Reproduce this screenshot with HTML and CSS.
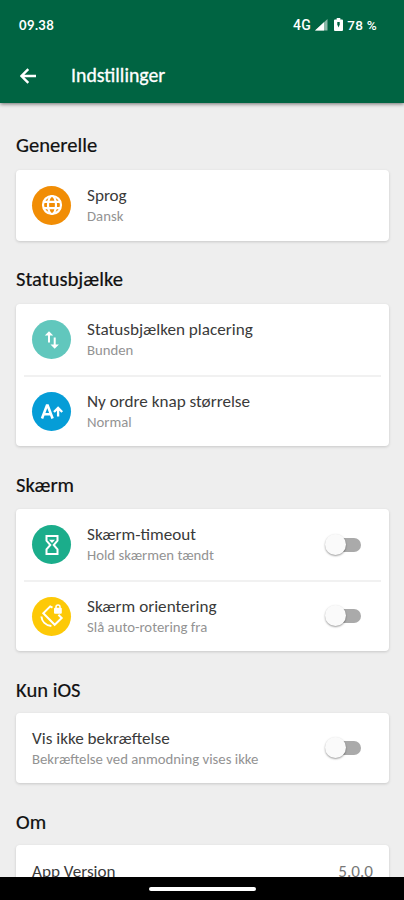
FILE: index.html
```
<!DOCTYPE html>
<html lang="da">
<head>
<meta charset="utf-8">
<title>Indstillinger</title>
<link rel="stylesheet" href="styles.css">
</head>
<body>
<div class="screen">
  <header class="top">
    <div class="status">
      <span class="time">09.38</span>
      <div class="indicators">
        <span class="net">4G</span>
        <svg class="signal" width="13" height="12" viewBox="0 0 13 12"><path d="M0 11.5 12.5 0v11.5z" fill="#fff" opacity=".55"/><path d="M0 11.5 9 3.2v8.3z" fill="#fff"/></svg>
        <svg class="battery" width="9" height="13" viewBox="0 0 9 13"><path d="M2.7 0h3.6v1.4H8q1 0 1 1V12q0 1-1 1H1q-1 0-1-1V2.4q0-1 1-1h1.7z" fill="#fff"/><path d="M3.3 4h2.4v2.5L4.5 9.5 3.3 6.5z" fill="#006442"/></svg>
        <span class="percent">78 %</span>
      </div>
    </div>
    <div class="appbar">
      <svg class="back" width="16" height="16" viewBox="0 0 16 16" fill="none" stroke="#fff" stroke-width="2.4"><path d="M16 8H2M8.3 1.2 1.5 8l6.8 6.8"/></svg>
      <h1>Indstillinger</h1>
    </div>
  </header>
  <main>
    <h2 class="h-general">Generelle</h2>
    <section class="card">
      <div class="row single">
        <div class="icon orange"><svg width="22" height="22" viewBox="0 0 22 22" fill="none" stroke="#fff" stroke-width="2.2"><circle cx="11" cy="11" r="9"/><ellipse cx="11" cy="11" rx="4" ry="9"/><path d="M2.8 7.8h16.4M2.8 14.2h16.4"/></svg></div>
        <div class="text"><p class="title">Sprog</p><p class="sub">Dansk</p></div>
      </div>
    </section>
    <h2>Statusbjælke</h2>
    <section class="card">
      <div class="row">
        <div class="icon teal"><svg width="16" height="20" viewBox="0 0 16 20" fill="none" stroke="#fff" stroke-width="2"><path d="M5 12.5V3M10.7 7.5v9.5"/><path d="M.8 5.6 5 1.3l4.2 4.3zM6.5 14.4l4.2 4.3 4.2-4.3z" fill="#fff" stroke="none"/></svg></div>
        <div class="text"><p class="title">Statusbjælken placering</p><p class="sub">Bunden</p></div>
      </div>
      <div class="row">
        <div class="icon blue"><svg width="24" height="18" viewBox="0 0 24 18" fill="none" stroke="#fff" stroke-width="2.6"><path d="M2 16.5 6.9 3.5h.8l4.9 13M4 12.3h6.6"/><path d="M18.1 14.5V6M14 10l4.1-4.1 4.1 4.1" stroke-width="2.3"/></svg></div>
        <div class="text"><p class="title">Ny ordre knap størrelse</p><p class="sub">Normal</p></div>
      </div>
    </section>
    <h2 class="h-screen">Skærm</h2>
    <section class="card">
      <div class="row">
        <div class="icon green"><svg width="14" height="22" viewBox="0 0 14 22" fill="none" stroke="#fff" stroke-width="2"><path d="M1.5 2h11v4.7L8.7 11l3.8 4.3V20h-11v-4.7L5.3 11 1.5 6.7z"/><path d="M4 5.8h6L7 9z" fill="#fff" stroke="none"/></svg></div>
        <div class="text"><p class="title">Skærm-timeout</p><p class="sub">Hold skærmen tændt</p></div>
        <div class="switch"><i class="track"></i><i class="thumb"></i></div>
      </div>
      <div class="row">
        <div class="icon yellow"><svg width="24" height="24" viewBox="0 0 24 24" fill="none" stroke="#fff" stroke-width="2"><path d="M12.5 3.6 10.2 2.4 3.3 9.2l11.4 11.6 7-6.8-3.3-3.3M1.4 12.5c.4 5 4.2 8.8 10 9.6"/><rect x="14" y="3.7" width="7.8" height="6" rx="1" fill="#fff" stroke="none"/><path d="M16 4.5V3q0-2 2-2t2 2v1.5" stroke-width="1.5"/></svg></div>
        <div class="text"><p class="title">Skærm orientering</p><p class="sub">Slå auto-rotering fra</p></div>
        <div class="switch"><i class="track"></i><i class="thumb"></i></div>
      </div>
    </section>
    <h2 class="h-ios">Kun iOS</h2>
    <section class="card">
      <div class="row single ios">
        <div class="text"><p class="title">Vis ikke bekræftelse</p><p class="sub">Bekræftelse ved anmodning vises ikke</p></div>
        <div class="switch"><i class="track"></i><i class="thumb"></i></div>
      </div>
    </section>
    <h2 class="h-about">Om</h2>
    <section class="card">
      <div class="row version">
        <p class="title">App Version</p><p class="title number">5.0.0</p>
      </div>
    </section>
  </main>
  <footer><span class="handle"></span></footer>
</div>
</body>
</html>
```
FILE: styles.css
```
* { box-sizing: border-box; }
body { margin: 0; font-family: Carlito, Lato, sans-serif; }
h1, h2, p { margin: 0; white-space: nowrap; }
svg { display: block; flex: none; }
.screen { width: 404px; height: 900px; display: flex; flex-direction: column; background: #eee; overflow: hidden; }
.top { height: 103px; flex: none; background: #006442; color: #fff; box-shadow: 0 1px 4px rgba(0,0,0,.55); z-index: 1; }
.status { height: 49px; display: flex; justify-content: space-between; align-items: center; padding: 0 27px 0 19px; font: 700 13px/16px Lato, sans-serif; }
.time { letter-spacing: .4px; }
.indicators { display: flex; align-items: center; }
.net, .percent { font: 500 13.5px/16px Roboto, sans-serif; }
.net { font-size: 14px; letter-spacing: .3px; }
.signal { margin: 0 6px 0 4px; }
.percent { margin-left: 4px; letter-spacing: .3px; }
.appbar { height: 54px; display: flex; align-items: center; padding-left: 20px; }
h1 { margin: -3px 0 0 35px; font-size: 19.8px; line-height: 24px; font-weight: 400; -webkit-text-stroke: .3px #fff; }
main { flex: 1; min-height: 0; overflow: hidden; padding: 0 15px 0 16px; }
h2 { height: 63px; padding-top: 26px; font-size: 20.6px; line-height: 24px; font-weight: 400; color: #111; -webkit-text-stroke: .2px #111; }
.h-general { height: 67px; padding-top: 30px; }
.h-screen { padding-top: 27px; }
.h-ios, .h-about { height: 62px; padding-top: 27px; }
.card { background: #fff; border-radius: 4px; box-shadow: 0 1px 3px rgba(0,0,0,.16); }
.row { height: 71px; display: flex; align-items: center; padding: 0 28px 0 16px; }
.row:first-child:not(:last-child) { padding-top: 1px; }
.row + .row { padding-top: 2px; background: linear-gradient(#f1f1f1, #f1f1f1) 8px 0 / calc(100% - 16px) 2px no-repeat; }
.single { height: 70.5px; }
.ios { padding-top: 1px; }
.icon { width: 39px; height: 39px; margin-right: 16px; border-radius: 50%; display: grid; place-items: center; flex: none; }
.orange { background: #f18d05; }
.teal { background: #61c7bd; }
.blue { background: #059dd7; }
.green { background: #1bad8b; }
.yellow { background: #fdc907; }
.text { flex: 1; }
.title { font-size: 17.15px; line-height: 21px; color: #3a3a3a; }
.sub { font-size: 14.75px; line-height: 20px; color: #939393; }
.switch { width: 36px; height: 22px; position: relative; flex: none; }
.track { position: absolute; left: 4px; top: 4px; width: 32px; height: 14px; border-radius: 7px; background: #aaa; }
.thumb { position: absolute; left: 0; top: 0; width: 21px; height: 21px; border-radius: 50%; background: #fafafa; box-shadow: 0 1px 2px rgba(0,0,0,.4); }
.version { height: 53px; padding-right: 16px; justify-content: space-between; }
.number { color: #777; }
footer { height: 23px; flex: none; background: #000; display: grid; place-items: center; }
.handle { width: 107px; height: 4px; border-radius: 2px; background: #fff; }
```
